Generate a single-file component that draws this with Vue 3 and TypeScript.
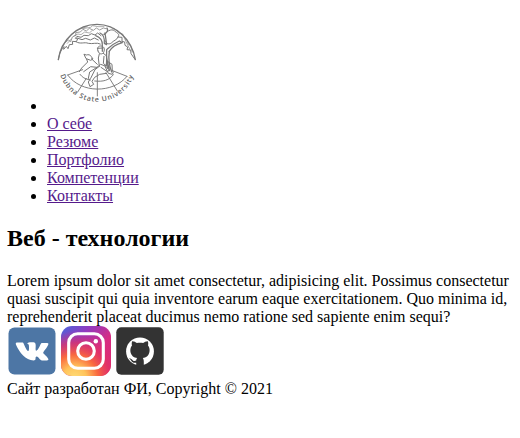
<script setup lang="ts">
interface NavLink {
  title: string
  href: string
}

const links: NavLink[] = [
  { title: 'О себе', href: '#' },
  { title: 'Резюме', href: '#' },
  { title: 'Портфолио', href: '#' },
  { title: 'Компетенции', href: '#' },
  { title: 'Контакты', href: '#' },
]
</script>

<template>
  <div class="page">
    <ul class="nav">
      <li>
        <svg class="logo" viewBox="6 -9 300 300" role="img">
          <defs>
            <path id="ring" d="M46 184 A116 116 0 0 0 266 184" />
          </defs>
          <g fill="none" stroke="#777" stroke-width="3" stroke-linecap="round" stroke-linejoin="round">
            <path d="M40 137 C48 77 98 31 156 31 C213 31 261 77 271 137" stroke-width="4" />
            <path d="M40 137 C43 118 50 104 57 98 L56 106 L64 97 L69 104 L73 92 L83 91 L82 82 L94 83 L98 75 L91 73 L96 67 L108 70 L117 64 L130 65 L139 59 L150 63 L158 57 L168 65" />
            <path d="M53 99 C67 67 96 44 126 38 M62 84 L70 78 L77 83 L82 69 L93 64 L92 56 L106 54 L114 46 L124 51 L133 43 L145 49 L154 42 L164 48 L175 42 L187 45" stroke-width="2.2" />
            <path d="M67 88 L79 75 M87 65 L99 60 L108 62 L119 54 L133 57 L142 49 M113 44 L137 40 L143 35 L159 38 L177 38" stroke-width="1.8" />
            <path d="M93 83 C106 92 118 83 130 88 C143 91 155 84 166 90 M96 72 L111 77 L122 73 L136 78 L148 72 L160 78" />
            <path d="M152 65 C168 71 173 80 172 94 L172 112 M165 57 C177 62 179 73 178 88 L185 92 L180 57 M177 61 C188 55 190 48 186 42" stroke-width="3.8" />
            <path d="M185 107 C181 139 191 151 193 170 M193 113 C189 139 193 156 200 174 M192 113 C200 100 213 91 232 86 L223 81 C207 88 197 96 187 105" stroke-width="3.8" />
            <path d="M180 60 C187 48 205 43 211 53 C220 58 224 62 219 69 C216 78 206 79 199 87 C190 93 183 88 179 79" />
            <path d="M219 69 L231 70 L231 82 L239 84 L240 94 L248 99 L246 107 L257 108 L258 119 L270 136" />
            <path d="M207 43 L224 58 L233 60 L239 74 L246 77 L250 91 L257 95 L262 114 M240 76 L247 91 L254 105" stroke-width="2" />
            <path d="M159 111 C155 100 161 95 169 96 C178 98 180 105 176 115 C172 122 162 122 159 111 M157 103 L174 102 M163 120 L160 132 L163 157 M175 118 L185 126 L184 156 L175 148 L177 127" />
            <path d="M118 121 L124 123 C130 121 136 122 139 128 L144 135 L137 139 L124 134 Z M125 136 L128 144 L110 162 L103 173 M116 173 L137 158 L156 160 L167 151 L181 156 L194 168 L187 173 L168 160" />
            <path d="M139 134 L157 151 M163 157 L150 167 L137 193 L130 204 L135 218 L146 211 L141 202 L149 190 L164 181 L185 178 M156 160 L134 174 L130 193 L136 198" />
            <path d="M183 155 L186 141 L201 151 L202 172 M188 143 L188 164 M180 157 L190 178 L202 181 L205 174" />
            <path d="M68 183 L113 167 M200 169 L246 187 M68 183 C108 239 204 239 246 187" stroke-width="2.8" />
            <path d="M105 181 C112 190 120 195 131 197 M149 201 C174 204 193 199 205 182 M157 176 L157 246 M124 193 L98 234 M183 176 L217 231" stroke-width="2.8" />
          </g>
          <text class="motto">
            <textPath href="#ring" textLength="286" lengthAdjust="spacing">Dubna State University</textPath>
          </text>
        </svg>
      </li>
      <li v-for="link in links" :key="link.title">
        <a :href="link.href">{{ link.title }}</a>
      </li>
    </ul>

    <h2>Веб - технологии</h2>

    <div class="copy">
      Lorem ipsum dolor sit amet consectetur, adipisicing elit. Possimus consectetur quasi suscipit qui quia
      inventore earum eaque exercitationem. Quo minima id, reprehenderit placeat ducimus nemo ratione sed
      sapiente enim sequi?
    </div>

    <footer>
      <div class="social">
        <svg viewBox="0 0 50 50">
          <rect x="1.5" y="1.5" width="47" height="47" rx="6" fill="#4d76a5" />
          <path
            fill="#fff"
            transform="translate(-.2 -.4)"
            d="M10 17h5.3c1 0 1.3.5 1.7 1.4 1.5 3.5 3.2 7 4.3 7 1 0 .9-1.7.9-4 0-2.2-.4-3-1.9-3.5.7-1.1 2.1-1.3 4.4-1.3 3.3 0 4.2.5 4.2 3.2 0 2.7-.5 5.1.5 5.4 1.2.2 3.2-3.8 4.4-6.5.4-.9.8-1.2 1.8-1.2h4.8c1.4 0 1.4.7.9 2-1.1 2.8-4.9 6.7-4.9 7.7 0 1.1 4.5 4 5.1 6.3.3 1-.3 1.4-1.4 1.4h-4.9c-2 0-3.6-3.9-5.3-3.9-1.3 0-1 1.1-1.2 2.5-.1 1-.7 1.4-1.9 1.4-8 0-14-7.8-17.6-15.7-.5-1.4-.1-2.2.8-2.2Z"
          />
        </svg>
        <svg viewBox="0 0 50 50">
          <defs>
            <linearGradient id="insta-base" x1="0" y1="0" x2="1" y2="1">
              <stop offset="0" stop-color="#4866dc" />
              <stop offset=".3" stop-color="#913abf" />
              <stop offset=".6" stop-color="#d82c82" />
              <stop offset="1" stop-color="#dc2970" />
            </linearGradient>
            <radialGradient id="insta-glow" cx=".27" cy="1.05" r=".95">
              <stop offset="0" stop-color="#ffdd78" />
              <stop offset=".25" stop-color="#ffc45b" />
              <stop offset=".5" stop-color="#f9683f" />
              <stop offset=".75" stop-color="#e43361" stop-opacity=".7" />
              <stop offset="1" stop-color="#d82c82" stop-opacity="0" />
            </radialGradient>
          </defs>
          <rect width="50" height="50" rx="11" fill="url(#insta-base)" />
          <rect width="50" height="50" rx="11" fill="url(#insta-glow)" />
          <g fill="none" stroke="#fff" stroke-width="3.1">
            <rect x="7.7" y="7.7" width="34.6" height="34.6" rx="9" />
            <circle cx="25" cy="25" r="8.3" />
          </g>
          <circle cx="34.8" cy="15.2" r="2.2" fill="#fff" />
        </svg>
        <svg viewBox="0 0 50 50">
          <rect x="1.3" y="1.3" width="47.4" height="47.4" rx="5" fill="#333" />
          <circle cx="25" cy="25.4" r="13.9" fill="#fff" />
          <path
            fill="#333"
            d="M17.2 15.2c1.7-.2 3.4.9 4.7 1.9 2-.5 4.2-.5 6.2 0 1.3-1 3-2.1 4.7-1.9.6 1.3.5 3 .2 4.2 3.3 3.8 1.7 12-5.2 12.7.9 1.2 1 2.5 1 4.2v4h-7.6v-3.6c-5 1-4.5-3.3-7.4-4.2 3.9-.6 3.5 3.9 7.4 2.1.1-1 .3-1.7 1-2.5-7-.8-8.5-8.9-5.2-12.7-.4-1.2-.4-2.9.2-4.2Z"
          />
        </svg>
      </div>
      <div>Сайт разработан ФИ, Copyright © 2021</div>
    </footer>
  </div>
</template>

<style>
body {
  margin: 0;
  background: #fff;
}
</style>

<style scoped>
.page {
  box-sizing: border-box;
  width: 520px;
  padding: 11px 9px 0 7px;
  font: 16px/18px 'Liberation Serif', 'Times New Roman', serif;
  color: #000;
}

.nav {
  margin: 0;
  padding-left: 40px;
}

.nav a {
  color: #551a8b;
}

.logo {
  width: 100px;
  height: 100px;
}

.motto {
  font: 600 21px 'Open Sans', sans-serif;
  fill: #606060;
}

h2 {
  margin: 20px 0;
  font-size: 24px;
  line-height: 27px;
}

.social {
  display: flex;
  gap: 4px;
  height: 54px;
}

.social svg {
  width: 50px;
  height: 50px;
}
</style>
